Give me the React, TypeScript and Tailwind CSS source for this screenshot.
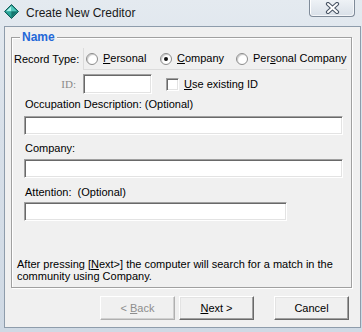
import React from "react";

function DiamondIcon() {
  return (
    <svg width="15" height="15" viewBox="0 0 15 15">
      <polygon points="7.5,0.5 14.5,7.5 7.5,14.5 0.5,7.5" fill="#1f8c84" stroke="#0f5e58" strokeWidth="1" />
      <polygon points="7.5,1.7 7.5,7.5 1.7,7.5" fill="#a8f3ea" />
      <polygon points="7.5,1.7 13.3,7.5 7.5,7.5" fill="#52c9bd" />
      <polygon points="1.7,7.5 7.5,7.5 7.5,13.3" fill="#2ca79b" />
      <polygon points="7.5,7.5 13.3,7.5 7.5,13.3" fill="#16766f" />
    </svg>
  );
}

function CloseGlyph() {
  return (
    <svg width="15" height="12" viewBox="0 0 15 12">
      <path d="M3 2 L12 10 M12 2 L3 10" stroke="#4a5666" strokeWidth="4.2" strokeLinecap="round" fill="none" />
      <path d="M3 2 L12 10 M12 2 L3 10" stroke="#ffffff" strokeWidth="2" strokeLinecap="round" fill="none" />
    </svg>
  );
}

function Radio({ checked }: { checked?: boolean }) {
  return (
    <span className="w-[12px] h-[12px] rounded-full border border-[#8c8c8c] bg-white shadow-[inset_1px_1px_1px_#c8c8c8] flex items-center justify-center shrink-0">
      {checked && <span className="w-[4px] h-[4px] rounded-full bg-[#111]" />}
    </span>
  );
}

const sunken =
  "bg-white border border-t-[#a0a0a0] border-l-[#a0a0a0] border-r-white border-b-white shadow-[inset_1px_1px_0_#696969,inset_-1px_-1px_0_#e3e3e3]";

const raised =
  "h-[24px] w-[75px] bg-[#f0f0f0] border border-t-white border-l-white border-r-[#696969] border-b-[#696969] shadow-[inset_-1px_-1px_0_#a0a0a0,inset_1px_1px_0_#e3e3e3] flex items-center justify-center";

export default function App() {
  return (
    <div className="w-[362px] h-[332px] flex flex-col bg-[linear-gradient(180deg,#e4eaf0_0%,#d8e0e9_40%,#cfd9e4_100%)] font-['Liberation_Sans',Arial,sans-serif] text-[11px] leading-[13px] text-black overflow-hidden">
      {/* Title bar */}
      <div className="h-[26px] flex items-start shrink-0">
        <div className="mt-[4px] ml-[4px]">
          <DiamondIcon />
        </div>
        <div className="ml-[7px] mt-[6px] text-[12px] leading-[14px] text-[#1a1a1a]">Create New Creditor</div>
        <div className="ml-auto mr-[7px] w-[46px] h-[17px] border border-t-0 border-[#7f8b99] rounded-b-[4px] bg-[linear-gradient(180deg,#eef2f6,#d9e0e8)] shadow-[inset_1px_0_0_#ffffff,inset_-1px_-1px_0_#f4f6f9] flex items-center justify-center">
          <CloseGlyph />
        </div>
      </div>

      {/* Client area */}
      <div className="flex-1 flex pl-[4px] pr-[6px] pb-[4px]">
        <div className="flex-1 bg-[#f0f0f0] border border-[#8e9cab] flex flex-col">
          {/* Group box */}
          <div className="relative mt-[10px] ml-[6px] mr-[8px] border border-[#a0a0a0] shadow-[inset_1px_1px_0_#ffffff,1px_1px_0_#ffffff] flex flex-col pb-[5px]">
            <div className="absolute left-[8px] top-[-8px] px-[2px] bg-[#f0f0f0] text-[12px] leading-[14px] font-bold text-[#2468d8]">
              Name
            </div>

            {/* Record type row */}
            <div className="mt-[10px] h-[22px] flex items-center">
              <div className="ml-[2px] w-[69px]">Record Type:</div>
              <div className="flex-1 mr-[4px] h-[22px] border-l border-b border-[#dcdcdc] flex items-center pl-[2px]">
                <div className="w-[74px] flex items-center">
                  <Radio />
                  <span className="ml-[5px]"><span className="underline">P</span>ersonal</span>
                </div>
                <div className="w-[76px] flex items-center">
                  <Radio checked />
                  <span className="ml-[5px]"><span className="underline">C</span>ompany</span>
                </div>
                <div className="flex items-center">
                  <Radio />
                  <span className="ml-[5px] whitespace-nowrap">Per<span className="underline">s</span>onal Company</span>
                </div>
              </div>
            </div>

            {/* ID row */}
            <div className="mt-[4px] h-[20px] flex items-center">
              <div className="w-[64px] text-right text-[#8a8a8a] font-['Liberation_Serif',serif] text-[11px]">ID:</div>
              <div className={`ml-[7px] w-[69px] h-[20px] ${sunken}`} />
              <div className={`ml-[14px] w-[13px] h-[13px] ${sunken}`} />
              <div className="ml-[5px]"><span className="underline">U</span>se existing ID</div>
            </div>

            <div className="mt-[4px] ml-[13px]">Occupation Description: (Optional)</div>
            <div className={`mt-[5px] ml-[12px] w-[319px] h-[19px] ${sunken}`} />

            <div className="mt-[7px] ml-[13px]">Company:</div>
            <div className={`mt-[4px] ml-[12px] w-[319px] h-[19px] ${sunken}`} />

            <div className="mt-[8px] ml-[13px] whitespace-pre">Attention:  (Optional)</div>
            <div className={`mt-[3px] ml-[12px] w-[263px] h-[19px] ${sunken}`} />

            <div className="mt-[37px] ml-[5px] leading-[12px] whitespace-nowrap">
              <div>
                After pressing [<span className="underline">N</span>ext&gt;] the computer will search for a match in the
              </div>
              <div>community using Company.</div>
            </div>
          </div>

          {/* Buttons */}
          <div className="mt-[8px] flex">
            <div className={`ml-[95px] ${raised} border-r-[#b0b0b0] border-b-[#b0b0b0] shadow-[inset_-1px_-1px_0_#d0d0d0] text-[#8d8d8d]`}>
              &lt; <span className="underline ml-[3px]">B</span>ack
            </div>
            <div className={`ml-[4px] ${raised}`}>
              <span className="underline">N</span>ext &gt;
            </div>
            <div className={`ml-[20px] ${raised}`}>Cancel</div>
          </div>
        </div>
      </div>
    </div>
  );
}
